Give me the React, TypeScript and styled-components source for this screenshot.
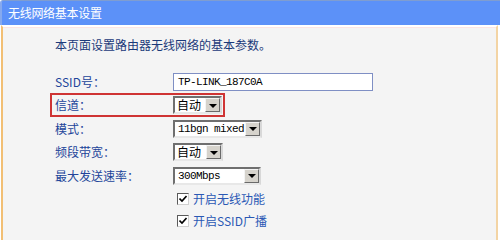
import React from 'react';
import styled, { createGlobalStyle } from 'styled-components';

const Global = createGlobalStyle`
  html, body { margin: 0; padding: 0; background: #ffffff; }
  body { font-family: "Noto Sans CJK SC", "Liberation Sans", sans-serif; font-size: 12px; }
`;

const Panel = styled.div`
  width: 500px;
  height: 240px;
  overflow: hidden;
  display: flex;
  flex-direction: column;
`;

const Header = styled.div`
  height: 25px;
  box-sizing: border-box;
  background: #5c91f8;
  border-top: 1px solid #7f9dd0;
  border-left: 2px solid #86a9ee;
  border-top-left-radius: 3px;
  color: #ffffff;
  font-size: 12px;
  line-height: 23px;
  padding-left: 6px;
  letter-spacing: -0.3px;
`;

const Body = styled.div`
  flex: 1;
  margin-left: 1px;
  margin-right: 2px;
  background: #f4f4f4;
  border-left: 2px solid #f2bf74;
  border-right: 2px solid #f3d4a4;
  border-top: 2px solid #ffffff;
  box-shadow: inset 0 1px 0 #fbe5e5;
  padding-left: 52px;
  display: flex;
  flex-direction: column;
`;

const Intro = styled.div`
  margin-top: 9px;
  line-height: 18px;
  color: #1b3a7a;
  font-size: 12px;
`;

const Form = styled.div`
  margin-top: 15.75px;
  display: flex;
  flex-direction: column;
`;

const Row = styled.div<{ $hl?: boolean }>`
  display: flex;
  align-items: center;
  height: 23.5px;
  width: fit-content;
  margin-left: -5px;
  padding-left: 5px;
  padding-right: 3px;
  box-shadow: ${(p) => (p.$hl ? 'inset 0 0 0 2px #cf3434' : 'none')};
`;

const Label = styled.div`
  width: 118px;
  color: #22449a;
  font-size: 12px;
  line-height: 16px;
`;

const TextInput = styled.div`
  width: 200px;
  height: 18px;
  box-sizing: border-box;
  background: #ffffff;
  border: 1px solid #7f8fc4;
  font-family: "Liberation Mono", monospace;
  font-size: 11px;
  letter-spacing: -0.6px;
  line-height: 16px;
  padding-left: 4px;
  color: #000;
`;

const Select = styled.div<{ $w: number }>`
  width: ${(p) => p.$w}px;
  height: 18px;
  box-sizing: border-box;
  background: #ffffff;
  border-style: solid;
  border-width: 2px;
  border-color: #6f6f6f #d8d8d8 #e8e8e8 #6f6f6f;
  display: flex;
  align-items: center;
  justify-content: space-between;
`;

const SelText = styled.span<{ $mono?: boolean }>`
  padding-left: ${(p) => (p.$mono ? '3px' : '2px')};
  font-family: ${(p) => (p.$mono ? '"Liberation Mono", monospace' : '"Noto Sans CJK SC", sans-serif')};
  font-size: ${(p) => (p.$mono ? '11px' : '12px')};
  letter-spacing: ${(p) => (p.$mono ? '-0.6px' : '0')};
  line-height: 14px;
  color: #000;
`;

const DropBtn = styled.span`
  width: 15px;
  height: 14px;
  box-sizing: border-box;
  background: #d6d3cc;
  border-style: solid;
  border-width: 1px;
  border-color: #f4f4f4 #6a6a6a #6a6a6a #f4f4f4;
  display: flex;
  align-items: center;
  justify-content: center;
`;

const Arrow = styled.span`
  width: 0;
  height: 0;
  border-left: 4px solid transparent;
  border-right: 4px solid transparent;
  border-top: 4px solid #000;
  margin-top: 1px;
`;

const CheckRow = styled.div`
  display: flex;
  align-items: center;
  height: 22.5px;
  padding-left: 122px;
  gap: 4px;
  &:first-of-type { margin-top: 2.75px; }
`;

const CheckBox = styled.span`
  width: 12px;
  height: 12px;
  box-sizing: border-box;
  background: #ffffff;
  border-style: solid;
  border-width: 1px;
  border-color: #5a5a5a #d0d0d0 #d0d0d0 #5a5a5a;
  display: flex;
  align-items: center;
  justify-content: center;
`;

const CheckLabel = styled.span`
  color: #2a58b4;
  font-size: 12px;
  line-height: 16px;
`;

const Dropdown: React.FC<{ w: number; text: string; mono?: boolean }> = ({ w, text, mono }) => (
  <Select $w={w}>
    <SelText $mono={mono}>{text}</SelText>
    <DropBtn>
      <Arrow />
    </DropBtn>
  </Select>
);

const Check: React.FC<{ label: string }> = ({ label }) => (
  <CheckRow>
    <CheckBox>
      <svg width="8" height="8" viewBox="0 0 8 8">
        <path d="M0.5 3.5 L3 6 L7.5 1" stroke="#000" strokeWidth="1.6" fill="none" />
      </svg>
    </CheckBox>
    <CheckLabel>{label}</CheckLabel>
  </CheckRow>
);

export default function App() {
  return (
    <Panel>
      <Global />
      <Header>无线网络基本设置</Header>
      <Body>
        <Intro>本页面设置路由器无线网络的基本参数。</Intro>
        <Form>
          <Row>
            <Label>SSID号：</Label>
            <TextInput>TP-LINK_187C0A</TextInput>
          </Row>
          <Row $hl>
            <Label>信道：</Label>
            <Dropdown w={49} text="自动" />
          </Row>
          <Row>
            <Label>模式：</Label>
            <Dropdown w={89} text="11bgn mixed" mono />
          </Row>
          <Row>
            <Label>频段带宽：</Label>
            <Dropdown w={50} text="自动" />
          </Row>
          <Row>
            <Label>最大发送速率：</Label>
            <Dropdown w={88} text="300Mbps" mono />
          </Row>
          <Check label="开启无线功能" />
          <Check label="开启SSID广播" />
        </Form>
      </Body>
    </Panel>
  );
}
